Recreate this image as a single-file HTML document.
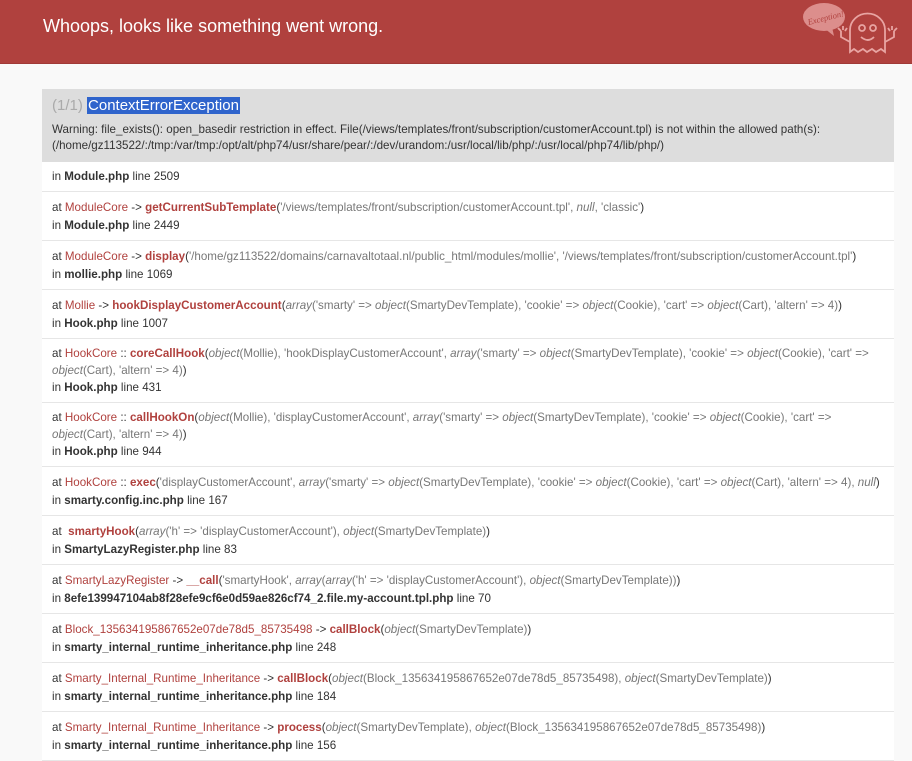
<!DOCTYPE html>
<html><head><meta charset="utf-8"><style>
*{margin:0;padding:0;box-sizing:border-box}
body{width:912px;height:750px;overflow:hidden;background:#f9f9f9;font-family:"Liberation Sans",Arial,sans-serif;color:#333}
.hd{height:64px;background:#b0413e;border-bottom:1px solid #a03a37;position:relative}
.hd h1{position:absolute;left:43px;top:16px;font-size:18px;font-weight:normal;color:#fff}
.ghost{position:absolute;left:798px;top:0}
.box{position:absolute;left:42px;top:89px;width:852px;}
.top{background:#ddd;padding:6px 10px 8px 10px;height:73px}
.top h2{font-size:15px;font-weight:normal;color:#aaa;line-height:22px}
.sel{background:#2f64cc;color:#fff;padding:0 1px}
.top p{font-size:11.6px;line-height:16px;color:#333;margin-top:5px}
.r{background:#fff;border-bottom:1px solid #e6e6e6;padding:7px 10px 5px 10px;font-size:11.6px;line-height:18px;white-space:nowrap}
.w{line-height:16.5px}
.c{color:#b0413e}.m{color:#b0413e;font-weight:bold}.a{color:#777}.a i{font-style:italic}
b{font-weight:bold}
</style></head><body>
<div class="hd"><h1>Whoops, looks like something went wrong.</h1>
<svg class="ghost" width="114" height="64" viewBox="0 0 114 64" fill="none" stroke="#e8a4a2" stroke-width="1.8">
<ellipse cx="26" cy="17" rx="21" ry="14" fill="#dc8e8c" stroke="none"/>
<path d="M26 28 L36 36 L34 27" fill="#dc8e8c" stroke="none"/>
<text x="9" y="21" font-size="8.5" font-style="italic" fill="#b0413e" stroke="none" font-family="Liberation Serif,serif" transform="rotate(-14 26 17)">Exception!</text>
<path d="M52 52 V30 a17 16 0 0 1 35 0 V52 l-4 -3 -5 3 -4 -3 -5 3 -4 -3 -5 3 -4 -3z"/>
<circle cx="64" cy="28" r="3"/><circle cx="75" cy="28" r="3"/>
<path d="M63 37 q7 6 13 0"/>
<path d="M52 42 l-9 -5 v-6 M43 31 l-3 -3 M45 30 v-4 M47 31 l2 -3"/>
<path d="M87 42 l9 -5 v-6 M96 31 l3 -3 M94 30 v-4 M92 31 l-2 -3"/>
</svg></div>
<div class="box">
<div class="top"><h2>(1/1) <span class="sel">ContextErrorException</span></h2>
<p>Warning: file_exists(): open_basedir restriction in effect. File(/views/templates/front/subscription/customerAccount.tpl) is not within the allowed path(s):<br>(/home/gz113522/:/tmp:/var/tmp:/opt/alt/php74/usr/share/pear/:/dev/urandom:/usr/local/lib/php/:/usr/local/php74/lib/php/)</p></div>
<div class="r" style="padding-top:6px">in <b>Module.php</b> line 2509</div>
<div class="r">at <span class="c">ModuleCore</span> -&gt; <span class="m">getCurrentSubTemplate</span>(<span class="a">'/views/templates/front/subscription/customerAccount.tpl', <i>null</i>, 'classic'</span>)<br>in <b>Module.php</b> line 2449</div>
<div class="r">at <span class="c">ModuleCore</span> -&gt; <span class="m">display</span>(<span class="a">'/home/gz113522/domains/carnavaltotaal.nl/public_html/modules/mollie', '/views/templates/front/subscription/customerAccount.tpl'</span>)<br>in <b>mollie.php</b> line 1069</div>
<div class="r">at <span class="c">Mollie</span> -&gt; <span class="m">hookDisplayCustomerAccount</span>(<span class="a"><i>array</i>('smarty' =&gt; <i>object</i>(SmartyDevTemplate), 'cookie' =&gt; <i>object</i>(Cookie), 'cart' =&gt; <i>object</i>(Cart), 'altern' =&gt; 4)</span>)<br>in <b>Hook.php</b> line 1007</div>
<div class="r"><div class="w">at <span class="c">HookCore</span> :: <span class="m">coreCallHook</span>(<span class="a"><i>object</i>(Mollie), 'hookDisplayCustomerAccount', <i>array</i>('smarty' =&gt; <i>object</i>(SmartyDevTemplate), 'cookie' =&gt; <i>object</i>(Cookie), 'cart' =&gt;<br><i>object</i>(Cart), 'altern' =&gt; 4)</span>)</div>in <b>Hook.php</b> line 431</div>
<div class="r"><div class="w">at <span class="c">HookCore</span> :: <span class="m">callHookOn</span>(<span class="a"><i>object</i>(Mollie), 'displayCustomerAccount', <i>array</i>('smarty' =&gt; <i>object</i>(SmartyDevTemplate), 'cookie' =&gt; <i>object</i>(Cookie), 'cart' =&gt;<br><i>object</i>(Cart), 'altern' =&gt; 4)</span>)</div>in <b>Hook.php</b> line 944</div>
<div class="r">at <span class="c">HookCore</span> :: <span class="m">exec</span>(<span class="a">'displayCustomerAccount', <i>array</i>('smarty' =&gt; <i>object</i>(SmartyDevTemplate), 'cookie' =&gt; <i>object</i>(Cookie), 'cart' =&gt; <i>object</i>(Cart), 'altern' =&gt; 4), <i>null</i></span>)<br>in <b>smarty.config.inc.php</b> line 167</div>
<div class="r">at &nbsp;<span class="m">smartyHook</span>(<span class="a"><i>array</i>('h' =&gt; 'displayCustomerAccount'), <i>object</i>(SmartyDevTemplate)</span>)<br>in <b>SmartyLazyRegister.php</b> line 83</div>
<div class="r">at <span class="c">SmartyLazyRegister</span> -&gt; <span class="m">__call</span>(<span class="a">'smartyHook', <i>array</i>(<i>array</i>('h' =&gt; 'displayCustomerAccount'), <i>object</i>(SmartyDevTemplate))</span>)<br>in <b>8efe139947104ab8f28efe9cf6e0d59ae826cf74_2.file.my-account.tpl.php</b> line 70</div>
<div class="r">at <span class="c">Block_135634195867652e07de78d5_85735498</span> -&gt; <span class="m">callBlock</span>(<span class="a"><i>object</i>(SmartyDevTemplate)</span>)<br>in <b>smarty_internal_runtime_inheritance.php</b> line 248</div>
<div class="r">at <span class="c">Smarty_Internal_Runtime_Inheritance</span> -&gt; <span class="m">callBlock</span>(<span class="a"><i>object</i>(Block_135634195867652e07de78d5_85735498), <i>object</i>(SmartyDevTemplate)</span>)<br>in <b>smarty_internal_runtime_inheritance.php</b> line 184</div>
<div class="r">at <span class="c">Smarty_Internal_Runtime_Inheritance</span> -&gt; <span class="m">process</span>(<span class="a"><i>object</i>(SmartyDevTemplate), <i>object</i>(Block_135634195867652e07de78d5_85735498)</span>)<br>in <b>smarty_internal_runtime_inheritance.php</b> line 156</div>
</div>
</body></html>
